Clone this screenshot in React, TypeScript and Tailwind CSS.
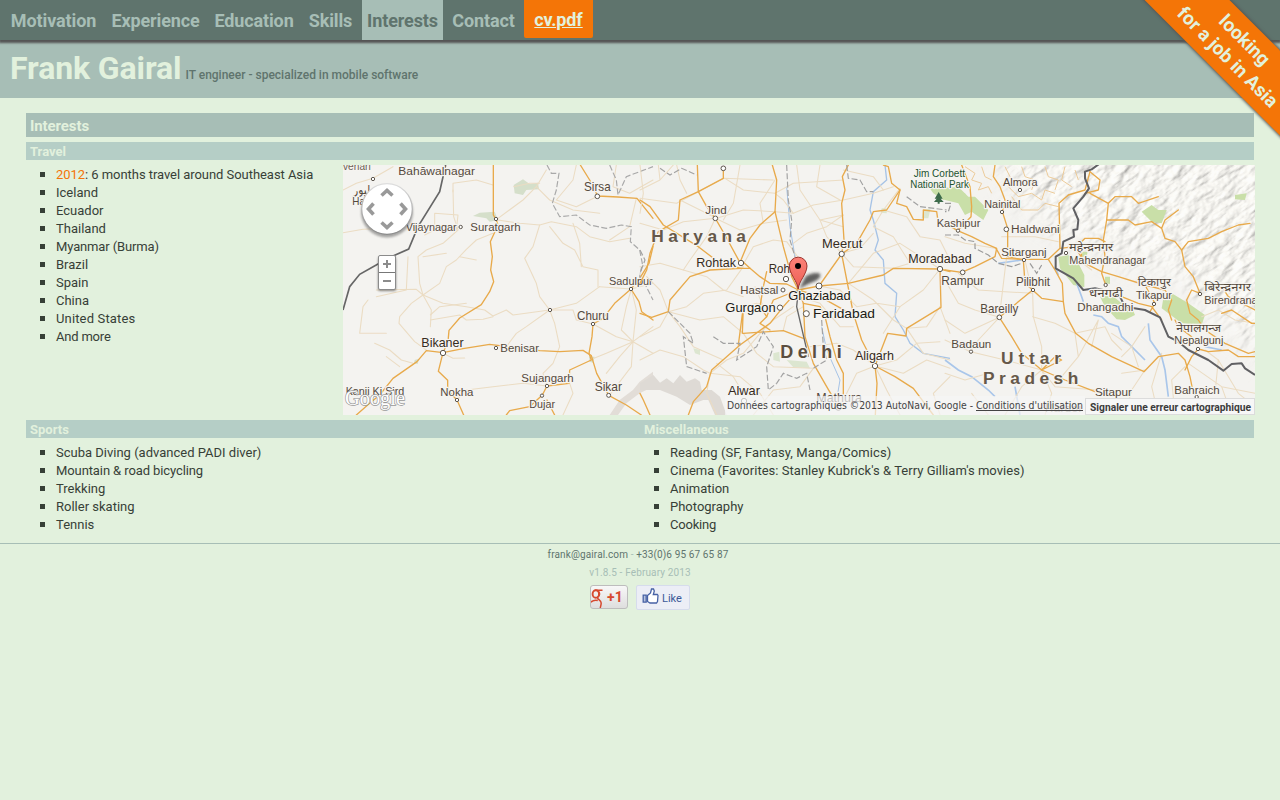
import React from "react";

type Label = { t: string; x: number; y: number; w: number; s: number; c?: string; b?: boolean };

const navItems = [
  { label: "Motivation", box: "w-[97px]" },
  { label: "Experience", box: "w-[99px]" },
  { label: "Education", box: "w-[90px]" },
  { label: "Skills", box: "w-[55px]" },
  { label: "Interests", box: "w-[81px]", active: true },
  { label: "Contact", box: "w-[73px]" },
];

const west = {
  minor: [
    "M0 90 40 70 90 55 150 20", "M0 218 60 208 150 205", "M330 95 330 70 400 60 450 75", "M330 90 332 170 345 210 300 250 250 270 225 290 230 370 240 405 265 450 262 500",
    "M450 220 400 240 370 268 340 300 310 320 290 370 240 405 205 430 170 470 168 490 215 545 250 570", "M100 390 220 388 240 405 300 430 370 440 425 450 450 468 490 450 510 465 620 450 700 430 770 380",
    "M275 160 275 210 245 225 M275 160 345 165 340 210", "M240 290 310 280 M350 290 400 300", "M262 465 290 440 370 430 M262 480 350 465 370 480 420 478 450 470",
    "M512 80 560 70 590 70 M465 175 540 120 580 80 610 30 M580 80 620 120 690 150 770 160", "M465 180 530 190 590 195 625 185 700 200 740 230 800 245 860 235",
    "M590 195 570 260 545 295 580 370 590 410 620 450 635 490 650 560 630 610 600 640 612 678", "M620 200 660 250 695 270 720 320 765 330 765 380 M690 190 710 250 715 320",
    "M620 450 550 500 520 520 490 560", "M770 380 865 387 930 370", "M865 387 850 440 835 510 870 545 930 500 M865 387 880 450 870 545 830 590 790 640 M870 545 930 580 M750 492 820 530 870 545 865 620 800 705",
    "M750 492 700 480 690 450 620 450", "M342 720 370 690 450 680 540 670 612 678", "M680 670 690 700 660 765 M740 600 790 580 870 545", "M60 440 50 520 130 520 M60 440 75 420", "M130 590 170 620 M300 580 330 595 365 594",
    "M195 290 190 390 100 410 M700 15 690 60 640 120 M640 120 700 140 765 108", "M820 15 810 80 860 100 930 60 M880 115 860 200 800 240", "M210 610 175 600 140 570 95 550",
  ],
  major: [
    "M451 15 451 165 459 178 465 195 442 245 448 290 443 330 452 365 440 395 415 434 350 474 318 511 315 545 300 578",
    "M300 578 250 572 222 605 150 655 110 705 80 730 40 765", "M300 578 286 634 314 661 314 690 342 720 362 765", "M300 578 360 566 440 553 590 572 650 575 720 571 745 587 761 640 797 706 850 735 895 765",
    "M712 15 740 60 764 108 825 111 882 115 930 175", "M864 387 815 430 780 475 750 492 747 530 738 580 745 600 680 630 678 670 612 678 598 705 560 740 500 752 490 765", "M612 720 635 765", "M864 387 888 425 896 455 930 480", "M930 260 918 310 890 355 864 387",
  ],
};

const central = {
  minor: [
    "M0 115 110 130 175 95 250 55 400 60 M0 90 60 60 100 15 M60 60 55 15", "M110 15 120 60 140 100 M120 120 230 175 310 150 405 155", "M255 55 310 90 405 100 460 70 610 60 M470 15 480 90 540 180 610 200",
    "M226 175 130 185 70 210 0 190 M226 175 300 210 370 190 440 180 M226 175 200 230 150 300 130 330", "M0 320 60 310 130 330 200 350 250 390 310 410", "M85 455 140 440 190 400 260 390 310 320 M85 455 180 480 250 470 310 520 M85 455 120 500 160 560 250 600",
    "M405 155 460 160 520 135 610 120 700 100 760 80", "M610 165 560 200 500 220 460 250 M460 160 430 120 405 100", "M605 280 560 230 540 180 610 165 M605 280 660 265 700 220 M605 280 640 320 760 325",
    "M537 378 600 390 650 440 710 430 780 440 M625 370 700 420 760 480 800 505 M625 370 700 280 780 250 900 327", "M705 618 640 570 590 550 510 560 M705 618 650 640 620 700 600 740 M705 618 770 600 830 550 900 545 M705 618 790 640 860 600 930 625",
    "M780 85 730 150 800 170 840 230 900 240 930 300 M730 150 700 200 760 230 810 310 760 325", "M900 327 850 390 780 440 730 520 M900 440 860 500 800 505 M900 440 930 520", "M303 325 340 260 400 240 440 245 480 300",
    "M0 530 60 500 85 455 M0 600 60 570 130 590 190 630 210 640 M210 640 260 600 310 580 360 520 M210 640 300 650 360 700 400 765 M210 640 200 700 230 765", "M310 520 350 580 400 620 520 625 M520 625 480 680 400 690 340 765", "M310 700 280 650 230 610",
    "M20 350 60 390 85 455 M0 15 10 100 0 160 M250 180 280 130 300 15 M370 190 360 130 405 60", "M540 15 530 80 600 120 M610 30 700 50 730 90 M800 505 850 580 930 600 M780 765 740 690 705 618 M900 765 880 700 930 650",
    "M480 410 540 430 600 500 640 500 M360 520 400 480 460 440 M430 510 440 470 490 440 M310 440 350 430 410 445 M345 380 370 440",
  ],
  major: [
    "M0 120 30 140 70 195 175 260 240 310 303 325 330 325 360 350 390 370 440 372 475 390", "M172 15 175 95 200 140 226 175 255 225 300 308", "M250 25 250 55 175 95 120 120 115 180 55 215 30 280 20 330 0 370",
    "M397 15 410 60 405 155 430 260 455 350 475 390", "M405 155 360 195 330 235 303 300 330 325", "M0 460 35 472 85 455 90 420 150 350 210 330 303 325", "M475 390 490 430 495 530 520 610 560 680 595 740",
    "M475 390 537 378 605 282 612 240 605 130 615 90 607 50 625 15", "M537 378 625 370 730 345 760 325 900 327 930 335", "M605 282 650 250 690 180 700 155 740 150 780 90 755 70 745 20 730 15", "M605 282 640 460 665 540 705 618 765 650 820 685 880 765",
    "M900 327 903 442 800 505 798 528 743 520 705 618 711 670 706 765", "M475 390 430 440 390 490 300 555 260 590 215 630 200 680 160 725 145 765", "M310 520 430 512 490 535", "M307 520 310 440 295 555", "M475 390 400 420 380 470 360 490 390 510",
    "M490 430 540 440 555 470 570 530 590 600 610 640 610 700 600 745", "M0 700 10 720 30 765 M380 335 370 380 360 440 380 470", "M780 90 770 130 800 140 820 178 850 180 850 150 890 155 895 190 930 200",
    "M475 390 540 410 630 460",
  ],
};

const east = {
  minor: [
    "M40 340 100 390 180 395 263 400 M0 360 40 430 90 450 163 472", "M163 472 60 520 0 480 M163 472 100 540 77 575 M263 400 265 470 290 560 290 630", "M390 520 330 490 263 470 M77 575 0 540 M77 575 180 600 290 630 330 680 460 690",
    "M290 630 230 680 180 765 M290 630 320 700 300 765 M390 520 400 590 350 650 M390 520 480 500 500 540 530 570 M440 560 460 480 400 590", "M163 472 180 330 185 290 M0 230 60 250 150 265 M240 300 260 390",
    "M170 230 270 230 340 245 M530 640 600 630 M540 765 560 690 600 630 M720 620 680 660 690 765 M730 610 830 680 930 700 M780 570 820 600 810 700 M830 680 860 765", "M770 470 820 450 870 480 930 490 M400 300 440 330", "M500 520 560 560 580 620 M80 700 130 765 M0 640 60 660 130 640",
    "M600 500 560 560 530 590 M650 580 620 680 640 765 M820 600 880 700 930 740",
  ],
  major: [
    "M0 330 50 337 90 320 150 290 155 265 120 250 80 230 38 212 0 190", "M50 15 75 80 80 140 78 170 40 210", "M150 15 145 50 165 80 180 120 172 155 188 205 188 290 235 300 240 370 263 390", "M153 265 170 295 235 298 310 298 345 265 342 130 370 105 420 90 435 35",
    "M163 472 200 530 230 580 290 630 350 600 330 590 290 630", "M163 472 263 390 290 415 355 425 352 370 330 330 310 298", "M355 425 360 460 392 520 430 550 500 590 597 635 640 590 700 580 720 600 735 650 745 700",
    "M720 630 740 590 760 567 790 575 850 570 880 590 930 590", "M290 630 360 660 450 695", "M435 35 465 60 460 90 420 100 M435 100 490 130 485 180 475 240 480 290 470 340 482 375", "M345 265 390 260 420 310 470 335 520 350 600 375 660 390 680 420 670 450 680 480",
    "M490 130 510 110 560 110 580 130 640 110 M485 180 550 180 570 195 620 185 650 205 660 235 690 245 710 270 720 320 745 350 765 400 M650 205 660 180 700 150", "M710 270 730 245 790 235 830 215 880 195 915 190",
    "M765 400 740 390 725 420 735 460 760 480 780 510 840 550 910 580 930 575 M780 390 830 380 850 410 930 450 M830 460 860 450 920 490 930 490", "M600 375 630 430 615 455 M530 410 580 430 620 440 650 480 M690 480 700 500 740 530",
    "M410 290 405 250 420 235 460 235 480 245",
  ],
  hillRoads: "M60 20 90 40 80 60 110 70 100 90 130 80 140 100 M180 20 200 60 190 80 220 110 260 100 290 120 300 90 330 100 M230 20 240 50 270 60 260 90 M300 20 310 50 340 60 330 90 M200 110 230 150 280 150 300 130 340 140 M110 20 120 50 140 60 M360 20 350 60 380 80 M390 30 400 60",
};

const westLabels: Label[] = [
  { t: "venari", x: 0, y: 30, w: 83, s: 33, c: "#6b6154" },
  { t: "Bahāwalnagar", x: 166, y: 44, w: 230, s: 35 },
  { t: "لپور", x: 30, y: 101, w: 52, s: 36 },
  { t: "Ha", x: 28, y: 134, w: 38, s: 34 },
  { t: "Vijaynagar", x: 188, y: 212, w: 153, s: 33 },
  { t: "Suratgarh", x: 382, y: 212, w: 151, s: 34 },
  { t: "Sirsa", x: 723, y: 92, w: 80, s: 36 },
  { t: "Sadulpur", x: 798, y: 374, w: 131, s: 33 },
  { t: "Churu", x: 702, y: 480, w: 95, s: 36 },
  { t: "Bikaner", x: 235, y: 561, w: 127, s: 39, c: "#352b22" },
  { t: "Benisar", x: 472, y: 576, w: 116, s: 34 },
  { t: "Sujangarh", x: 535, y: 666, w: 157, s: 34 },
  { t: "Sikar", x: 755, y: 693, w: 82, s: 36 },
  { t: "Dujar", x: 559, y: 743, w: 77, s: 33 },
  { t: "Nokha", x: 292, y: 708, w: 99, s: 34 },
  { t: "Kanji Ki Sird", x: 8, y: 706, w: 176, s: 33 },
];

const centralLabels: Label[] = [
  { t: "Jind", x: 196, y: 162, w: 64, s: 35 },
  { t: "Haryana", x: 34, y: 247, w: 284, s: 52, c: "#65584a", b: true },
  { t: "Rohtak", x: 169, y: 321, w: 119, s: 38, c: "#352b22" },
  { t: "Rohini", x: 386, y: 339, w: 98, s: 38, c: "#352b22" },
  { t: "Meerut", x: 546, y: 264, w: 121, s: 38, c: "#352b22" },
  { t: "Hastsal", x: 301, y: 401, w: 114, s: 34 },
  { t: "Ghaziabad", x: 445, y: 421, w: 187, s: 39, c: "#201a14" },
  { t: "Gurgaon", x: 256, y: 457, w: 151, s: 39, c: "#201a14" },
  { t: "Faridabad", x: 519, y: 473, w: 186, s: 40, c: "#201a14" },
  { t: "Delhi", x: 421, y: 595, w: 184, s: 54, c: "#5b4e40", b: true },
  { t: "Aligarh", x: 645, y: 601, w: 117, s: 38, c: "#352b22" },
  { t: "Alwar", x: 264, y: 705, w: 96, s: 37, c: "#352b22" },
  { t: "Mathura", x: 529, y: 726, w: 137, s: 37 },
  { t: "Jim Corbett", x: 821, y: 52, w: 154, s: 30, c: "#1d5330" },
  { t: "National Park", x: 811, y: 85, w: 176, s: 30, c: "#1d5330" },
  { t: "Moradabad", x: 805, y: 310, w: 190, s: 38, c: "#352b22" },
];

const eastLabels: Label[] = [
  { t: "Almora", x: 174, y: 78, w: 104, s: 34 },
  { t: "Nainital", x: 118, y: 143, w: 108, s: 34 },
  { t: "Kashipur", x: -25, y: 201, w: 131, s: 33 },
  { t: "Haldwani", x: 198, y: 219, w: 146, s: 35 },
  { t: "Sitarganj", x: 169, y: 288, w: 136, s: 34 },
  { t: "Rampur", x: -11, y: 375, w: 128, s: 36 },
  { t: "Pilibhit", x: 213, y: 378, w: 102, s: 36 },
  { t: "Bareilly", x: 106, y: 460, w: 114, s: 36 },
  { t: "Badaun", x: 19, y: 564, w: 120, s: 35 },
  { t: "Uttar", x: 168, y: 612, w: 180, s: 52, c: "#65584a", b: true },
  { t: "Pradesh", x: 114, y: 672, w: 286, s: 52, c: "#65584a", b: true },
  { t: "Sitapur", x: 450, y: 707, w: 111, s: 34 },
  { t: "Bahraich", x: 688, y: 702, w: 136, s: 34 },
  { t: "महेन्द्रनगर", x: 372, y: 272, w: 133, s: 33 },
  { t: "Mahendranagar", x: 373, y: 312, w: 230, s: 35 },
  { t: "धनगढी", x: 432, y: 410, w: 102, s: 33 },
  { t: "Dhangadhi", x: 397, y: 452, w: 168, s: 35 },
  { t: "टिकापुर", x: 578, y: 379, w: 100, s: 33 },
  { t: "Tikapur", x: 573, y: 417, w: 108, s: 34 },
  { t: "बिरेन्द्रनगर", x: 778, y: 394, w: 140, s: 33 },
  { t: "Birendranagar", x: 778, y: 431, w: 207, s: 34 },
  { t: "नेपालगन्ज", x: 694, y: 516, w: 134, s: 33 },
  { t: "Nepalgunj", x: 688, y: 552, w: 147, s: 34 },
];

const dots = {
  west: [[90, 57, 5], [353, 201, 5], [459, 177, 5], [763, 109, 7], [864, 387, 5], [621, 450, 5], [750, 492, 5], [300, 579, 8], [459, 564, 5], [612, 678, 5], [597, 707, 5], [342, 720, 5], [797, 706, 6]],
  central: [[250, 25, 7], [226, 175, 7], [303, 309, 8], [438, 357, 8], [605, 282, 8], [429, 390, 6], [537, 378, 9], [420, 443, 8], [499, 461, 9], [705, 618, 8], [312, 723, 8], [595, 743, 8], [900, 327, 8]],
  east: [[225, 90, 5], [171, 156, 5], [184, 208, 7], [39, 212, 5], [363, 279, 5], [237, 300, 5], [53, 337, 7], [264, 390, 5], [163, 472, 7], [78, 575, 5], [482, 375, 5], [627, 432, 5], [765, 402, 5], [759, 567, 5], [755, 711, 5]],
};

function Roads({ minor, major }: { minor: string[]; major: string[] }) {
  return (
    <g fill="none" strokeLinejoin="round" strokeLinecap="round">
      {minor.map((d) => <path key={d} d={d} stroke="#ebdcc3" strokeWidth="3.2" />)}
      {major.map((d) => <path key={d} d={d} stroke="#e8aa4b" strokeWidth="4" />)}
    </g>
  );
}

function Dots({ points }: { points: number[][] }) {
  return (
    <g fill="#fff" stroke="#5b544c" strokeWidth="3">
      {points.map(([x, y, r]) => <circle key={`${x}-${y}`} cx={x} cy={y} r={r} />)}
    </g>
  );
}

function Labels({ items }: { items: Label[] }) {
  return (
    <g fontFamily='"Liberation Sans", "Noto Sans", "DejaVu Sans", sans-serif' stroke="#f6f4f0" strokeWidth="7" strokeLinejoin="round" paintOrder="stroke">
      {items.map((l) => (
        <text key={l.t} x={l.x} y={l.y} fontSize={l.s} fill={l.c ?? "#54493d"} fontWeight={l.b ? 700 : 400} textLength={l.w} lengthAdjust={l.b ? "spacing" : "spacingAndGlyphs"}>
          {l.t}
        </text>
      ))}
    </g>
  );
}

function TravelMap() {
  return (
    <svg viewBox="343 165 912 250" className="block h-[250px] w-[912px]">
      <defs>
        <filter id="relief" x="0" y="0" width="100%" height="100%">
          <feTurbulence type="fractalNoise" baseFrequency="0.05 0.12" numOctaves="4" seed="8" />
          <feDiffuseLighting surfaceScale="3.6" lightingColor="#f9f8f3" diffuseConstant="1.14">
            <feDistantLight azimuth="225" elevation="60" />
          </feDiffuseLighting>
        </filter>
        <filter id="soft"><feGaussianBlur stdDeviation="16" /></filter>
        <filter id="blur2"><feGaussianBlur stdDeviation="1.3" /></filter>
        <filter id="blur4" x="-30%" y="-30%" width="160%" height="160%"><feGaussianBlur stdDeviation="4" /></filter>
        <mask id="hills">
          <path filter="url(#soft)" fill="#fff" d="M1000 110 1015 195 1060 230 1090 240 1130 262 1175 272 1205 305 1235 330 1320 385 1320 110Z" />
        </mask>
        <linearGradient id="pin" x1="0" x2="0" y1="0" y2="1"><stop stopColor="#fb8278" /><stop offset="1" stopColor="#ee5f55" /></linearGradient>
        <linearGradient id="ring" x1="0" x2="0" y1="0" y2="1"><stop stopColor="#dedede" /><stop offset="1" stopColor="#8a8a8a" /></linearGradient>
      </defs>
      <rect x="343" y="165" width="912" height="250" fill="#f4f3f0" />
      <g mask="url(#hills)" opacity="0.75">
        <rect x="900" y="-60" width="560" height="560" filter="url(#relief)" transform="rotate(-35 1140 230)" />
      </g>

      <g transform="translate(343 160) scale(.33333)">
        <path fill="#d5dfca" d="M390 168 410 158 455 155 465 180 440 185 430 175ZM512 75 540 58 560 72 585 68 588 88 550 90 540 105 515 100ZM215 600 228 596 224 612 213 610ZM738 590 755 590 750 608 740 605Z" />
        <path fill="#e2ddd7" d="M800 765 830 720 870 690 890 665 930 635 930 680 890 700 850 730 825 765Z" />
        <Roads {...west} />
        <path d="M0 450 20 380 50 343 105 312 150 288 197 267 225 200 290 95 308 15" fill="none" stroke="#666" strokeWidth="5" />
        <path d="M612 15 625 40 648 40 640 90 628 130 650 170 700 165 740 195 790 205 835 195 865 200 862 245 890 270 898 310 890 350 910 380 930 420M800 15 820 60 825 105 850 50 930 20" fill="none" stroke="#a9a9a9" strokeWidth="3.5" strokeDasharray="18 7" />
        <Dots points={dots.west} />
        <Labels items={westLabels} />
      </g>

      <g transform="translate(640 160) scale(.33333)">
        <path fill="#dedad5" d="M0 670 25 655 40 645 60 668 80 655 100 670 120 645 140 665 165 655 180 665 185 690 215 690 240 710 260 765 225 765 205 720 190 720 150 735 110 710 60 690 0 690Z" />
        <path fill="#dce6d0" d="M400 580 418 575 420 605 400 600ZM440 600 500 605 510 625 460 622ZM850 150 872 145 865 175 845 175ZM725 145 740 145 740 160 722 158ZM160 565 180 570 180 585 165 580Z" />
        <path fill="#c9dfa8" d="M855 65 930 85 975 100 990 130 960 115 910 120 880 100Z" />
        <g fill="none" stroke="#a6c3e6" strokeWidth="4">
          <path d="M735 15 740 60 700 95 690 150 700 180 715 240 705 270 730 300 735 370 770 400 765 470 790 510 810 550 850 580 930 595" />
          <path d="M440 80 450 200 465 290 M545 500 560 570 600 660 590 720" strokeWidth="3" />
        </g>
        <Roads {...central} />
        <g fill="none" stroke="#a2a2a2" strokeWidth="3.5" strokeDasharray="18 7">
          <path d="M60 25 90 45 125 25 170 45 M440 15 445 120 455 180 450 240 465 290 M620 15 625 55 660 60 680 95 700 95 M85 455 120 490 150 520 160 550 130 530 140 620 200 640 M220 530 250 550 300 550 290 600 350 560 370 515 400 560 380 620 385 690 410 670 430 640 470 655 500 640 510 690 M545 480 550 560 560 600 520 625 M800 110 840 140 920 150 M0 270 15 300 0 340" />
        </g>
        <path d="M475 390 470 440 505 590" fill="none" stroke="#666" strokeWidth="4" />
        <Dots points={dots.central} />
      </g>

      <g transform="translate(945 160) scale(.33333)">
        <path fill="#c9dfa8" d="M0 85 40 80 70 110 90 110 130 150 115 180 80 155 60 165 40 130 0 120ZM340 290 375 285 400 310 418 345 418 382 385 375 345 325ZM465 410 500 405 530 430 560 440 570 465 540 480 515 478 480 440ZM680 400 730 430 780 465 770 495 710 490 690 475 650 445 655 415ZM590 155 620 135 640 150 665 150 650 190 620 185ZM870 105 905 100 900 120 870 118ZM410 275 428 275 425 290 410 290ZM480 350 495 350 495 372 480 370Z" />
        <g fill="none" stroke="#a9c6ea" strokeWidth="5">
          <path d="M330 320 340 345 M395 370 410 410 415 425 M445 465 470 470 490 490 520 500 530 530 560 560 600 600 M610 490 615 540 650 590 660 630 670 710 M0 600 40 630 80 650 130 690 150 710 M210 680 225 765" />
          <path d="M780 560 830 570 M160 310 230 300" />
        </g>
        <path d={east.hillRoads} fill="none" stroke="#eccb9a" strokeWidth="3" strokeLinejoin="round" />
        <Roads minor={east.minor} major={east.major} />
        <path d="M0 225 40 225 60 240 90 245 90 265 130 285 160 310 200 320 230 310M255 310 275 340 290 315M0 130 18 130 10 155 0 155" fill="none" stroke="#9a9a9a" strokeWidth="3.5" strokeDasharray="18 7" />
        <path d="M465 10 440 28 420 35 420 55 432 85 415 110 385 145 400 180 397 208 385 210 387 230 355 245 350 280 332 290 332 325 385 355 415 390 450 385 520 400 540 440 600 450 645 472 670 530 700 545 730 570 790 600 835 632 860 612 890 610 900 625 930 645" fill="none" stroke="#606063" strokeWidth="6" strokeLinejoin="round" />
        <Dots points={dots.east} />
        <Labels items={eastLabels} />
        <text x="300" y="757" textLength="108" fontFamily='"Liberation Sans", sans-serif' fontSize="34" fill="#8c857c">Hardoi</text>
      </g>

      <g transform="translate(640 160) scale(.33333)">
        <Labels items={centralLabels} />
        <path d="M478 386 496 350Q515 336 538 340Q548 350 528 362Q505 370 478 386Z" fill="#222" opacity=".7" filter="url(#blur4)" />
        <path fill="#3c6a4a" d="M896 96 884 116H890L882 126H893V131H899V126H911L902 116H908Z" />
        <path d="M474.500 387C472 362 449 344 448 318A26.500 26.500 0 0 1 501 318C500 344 477 362 474.500 387Z" fill="url(#pin)" stroke="#9b312b" strokeWidth="3" />
        <circle cx="474" cy="318" r="9" fill="#000" />
      </g>

      <g>
        <ellipse cx="387" cy="212" rx="26" ry="25.5" fill="#333" opacity=".4" filter="url(#blur2)" />
        <circle cx="387" cy="209" r="25.3" fill="#fff" stroke="url(#ring)" strokeWidth="1.2" />
        <g fill="none" stroke="#999" strokeWidth="3.6">
          <path d="m381.5 195.5 5.5-5 5.5 5M381.5 222.5l5.5 5 5.5-5M373.5 203.500l-5 5.500 5 5.500M400.500 203.500l5 5.500-5 5.500" />
        </g>
        <rect x="378" y="257" width="18" height="34" rx="2" fill="#222" opacity=".5" filter="url(#blur2)" />
        <rect x="378.500" y="255.500" width="17" height="34" rx="1.500" fill="#fff" stroke="#8b8b8b" />
        <path d="M379 272.500h16" stroke="#777" />
        <path d="M383 264h8M387 260v8M383 281h8" stroke="#8c8c8c" strokeWidth="2" />
      </g>

      <g fontFamily='"Liberation Serif", serif' fontSize="22">
        <text x="345" y="405" textLength="60" lengthAdjust="spacingAndGlyphs" fill="#fff" stroke="#999" strokeWidth="1.500" paintOrder="stroke">Google</text>
      </g>
      <rect x="725" y="396" width="360" height="19" fill="#f5f5f5" opacity=".7" />
      <g fontFamily='"DejaVu Sans", sans-serif' fontSize="10" fill="#444">
        <text x="727" y="409" textLength="246" lengthAdjust="spacingAndGlyphs">Données cartographiques ©2013 AutoNavi, Google -</text>
        <text x="976" y="409" textLength="107" lengthAdjust="spacingAndGlyphs" textDecoration="underline">Conditions d'utilisation</text>
      </g>
      <rect x="1085.500" y="398.500" width="169" height="16" fill="#f7f7f7" stroke="#dcdcdc" />
      <text x="1090" y="411" textLength="161" lengthAdjust="spacingAndGlyphs" fontFamily="Roboto, sans-serif" fontWeight="700" fontSize="10" fill="#3c3c3c">Signaler une erreur cartographique</text>
    </svg>
  );
}

function BulletList({ items }: { items: React.ReactNode[] }) {
  return (
    <ul className="pt-[5px] pl-3.5 text-[13px] leading-[18px] text-[#374037]">
      {items.map((item, i) => (
        <li key={i} className="flex h-[18px] items-center">
          <span className="mr-[11px] size-[5px] shrink-0 bg-[#374037]" />
          <span className="pt-0.5 whitespace-nowrap">{item}</span>
        </li>
      ))}
    </ul>
  );
}

function SubHeading({ children }: { children: React.ReactNode }) {
  return <h3 className="h-[18px] bg-[#b5cec6] pl-1 text-[13px] leading-[19px] font-bold text-[#e2f1dd]">{children}</h3>;
}

export default function App() {
  return (
    <div className="relative min-h-screen overflow-hidden bg-[#e2f1dd] font-[Roboto,sans-serif]">
      <nav className="relative h-10 bg-[#5f746d] shadow-[0_2px_2px_1px_#555]">
        <ul className="flex gap-1 pl-[5px] text-[18px] font-bold tracking-[-0.12px] text-[#a7beb6]">
          {navItems.map((n) => (
            <li key={n.label} className={n.active ? `${n.box} h-10 bg-[#a7beb6] text-center leading-[41px] whitespace-nowrap text-[#5f746d]` : `${n.box} h-10 text-center leading-[41px] whitespace-nowrap`}>
              {n.label}
            </li>
          ))}
          <li className="h-[38px] w-[69px] rounded-b-[2px] bg-[#f47507] text-center leading-[39px] text-[#e2f1dd] underline">cv.pdf</li>
        </ul>
      </nav>

      <header className="flex h-[58px] items-baseline gap-1 bg-[#a7beb6] pl-2.5 whitespace-nowrap">
        <h1 className="pt-2 text-[32px] leading-[40px] font-bold tracking-[-0.1px] text-[#e2f1dd]">Frank Gairal</h1>
        <p className="text-[12px] font-medium text-[#5f746d]">IT engineer - specialized in mobile software</p>
      </header>

      <main className="mx-[26px] pt-[15px]">
        <h2 className="h-6 bg-[#a7beb6] pl-1 text-[15px] leading-[26px] font-bold tracking-[-0.1px] text-[#e2f1dd]">Interests</h2>
        <section className="pt-[5px]">
          <SubHeading>Travel</SubHeading>
          <div className="flex">
            <div className="w-[317px] shrink-0">
              <BulletList
                items={[
                  <span className="tracking-[-0.05px]"><span className="text-[#f47507]">2012</span>: 6 months travel around Southeast Asia</span>,
                  "Iceland", "Ecuador", "Thailand",
                  <span className="tracking-[-0.14px]">Myanmar (Burma)</span>,
                  "Brazil", "Spain", "China",
                  <span className="tracking-[0.15px]">United States</span>,
                  <span className="tracking-[-0.2px]">And more</span>,
                ]}
              />
            </div>
            <div className="shrink-0 pt-[5px]"><TravelMap /></div>
          </div>
        </section>
        <div className="grid grid-cols-2 pt-[5px]">
          <section>
            <SubHeading>Sports</SubHeading>
            <BulletList items={["Scuba Diving (advanced PADI diver)", <span className="tracking-[-0.1px]">Mountain & road bicycling</span>, "Trekking", "Roller skating", "Tennis"]} />
          </section>
          <section>
            <SubHeading>Miscellaneous</SubHeading>
            <BulletList items={[<span className="tracking-[0.09px]">Reading (SF, Fantasy, Manga/Comics)</span>, <span className="tracking-[0.03px]">Cinema (Favorites: Stanley Kubrick's & Terry Gilliam's movies)</span>, "Animation", "Photography", <span className="tracking-[-0.2px]">Cooking</span>]} />
          </section>
        </div>
      </main>

      <footer className="mt-[10px] border-t border-[#a7beb6] text-center text-[10px] leading-[18px] text-[#a7beb6]">
        <p className="pt-[2px] pr-1 tracking-[0.12px] text-[#5f746d]">frank@gairal.com <span className="text-[#a7beb6]">-</span> +33(0)6 95 67 65 87</p>
        <p className="tracking-[0.14px]">v1.8.5 - February 2013</p>
        <div className="mt-[3px] flex justify-center gap-2">
          <div className="flex h-6 w-[38px] items-center overflow-hidden rounded-[3px] border border-[#bdbdbd] bg-linear-to-b from-[#f8f8f8] to-[#dedede]">
            <svg viewBox="0 0 13 22" className="h-[22px] w-[13px] shrink-0" fill="none" stroke="#d6492f">
              <ellipse cx="4.800" cy="8" rx="3.200" ry="3.800" strokeWidth="1.900" />
              <path d="M4 4.200h7.500M7.500 5.500c1.800 2 .8 4.300-.8 5.800-1.200 1.500 3.500 3 3.500 5.700 0 1.500-.4 3-1 5M6.800 14.500c-3-.6-5.500.2-7 1.700" strokeWidth="1.500" />
            </svg>
            <span className="pl-[3px] text-[14px] font-bold text-[#d6492f]">+1</span>
          </div>
          <div className="flex h-[25px] w-[54px] items-center rounded-[2px] border border-[#d6dcec] bg-[#eceef6] pl-[5px]">
            <svg viewBox="0 0 17 16" className="-mt-1 h-4 w-[17px] shrink-0" fill="#fff" stroke="#4762a5" strokeWidth="1.300">
              <path d="M5.500 7.500 8.500 5 9.500 1h2l.8 2-1 3.500h4l.7 1-.5 6-1 1.500H8L5.500 13.500Z" />
              <path d="M1.200 7.200h3v7h-3z" fill="#b8c4df" />
            </svg>
            <span className="pt-[2px] pl-[3px] text-[11px] text-[#3b5998]">Like</span>
          </div>
        </div>
      </footer>

      <div className="pointer-events-none absolute top-0 right-0 size-[140px] overflow-hidden">
        <div className="absolute top-[20px] left-[-23px] flex h-[60px] w-[240px] rotate-45 flex-col justify-center bg-[#f47507] pr-[3px] text-center text-[19px] leading-[24px] font-bold whitespace-nowrap text-[#e2f1dd] shadow-[0_0_3px_1px_#555]">
          <span>looking</span>
          <span>for a job in Asia</span>
        </div>
      </div>
    </div>
  );
}
